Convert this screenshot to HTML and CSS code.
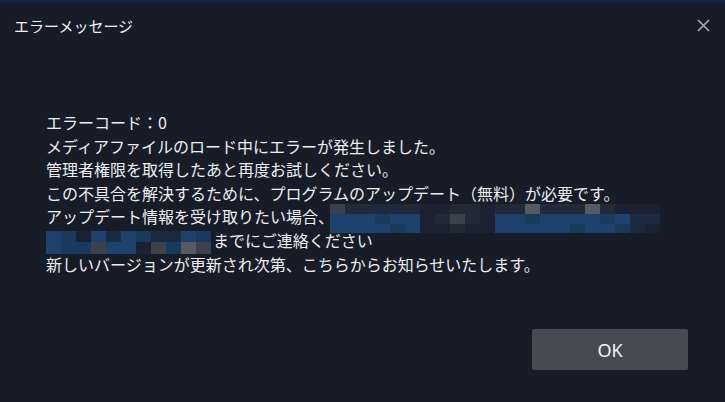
FILE: index.html
```html
<!DOCTYPE html>
<html lang="ja">
<head>
    <meta charset="UTF-8">
    <meta name="viewport" content="width=device-width, initial-scale=1.0">
    <title>エラーメッセージ</title>
    <link rel="stylesheet" href="styles.css">
</head>
<body>

    <div class="dialog">
        <div class="header">
            <span class="title">エラーメッセージ</span>
            <button class="close" aria-label="閉じる">
                <svg width="13" height="13" viewBox="0 0 13 13">
                    <path d="M1 1 L12 12 M12 1 L1 12" stroke="#a9aeb7" stroke-width="1.6" fill="none"/>
                </svg>
            </button>
        </div>

        <div class="message">
            <p>エラーコード：0</p>
            <p>メディアファイルのロード中にエラーが発生しました。</p>
            <p>管理者権限を取得したあと再度お試しください。</p>
            <p>この不具合を解決するために、プログラムのアップデート（無料）が必要です。</p>
            <p>アップデート情報を受け取りたい場合、<span class="mosaic wide">
                <i class="g"></i><i class="k"></i><i class="k"></i><i class="n"></i><i class="n"></i><i class="k"></i><i class="d"></i><i class="d"></i><i class="k"></i><i class="k"></i><i class="d"></i><i class="k"></i><i class="k"></i><i class="g2"></i><i class="k"></i><i class="k"></i><i class="k"></i><i class="g2"></i><i class="k"></i><i class="d"></i><i class="d"></i><i class="d"></i>
                <i class="b"></i><i class="b"></i><i class="b"></i><i class="b2"></i><i class="b"></i><i class="b"></i><i class="d"></i><i class="k"></i><i class="g"></i><i class="k"></i><i class="d"></i><i class="b"></i><i class="b"></i><i class="b2"></i><i class="b"></i><i class="b"></i><i class="b"></i><i class="b"></i><i class="b2"></i><i class="b"></i><i class="n"></i><i class="n"></i>
                <i class="b"></i><i class="b"></i><i class="b"></i><i class="b"></i><i class="b2"></i><i class="b"></i><i class="d"></i><i class="d"></i><i class="k"></i><i class="d"></i><i class="d"></i><i class="b"></i><i class="b"></i><i class="b"></i><i class="b"></i><i class="b"></i><i class="b2"></i><i class="b"></i><i class="b"></i><i class="b2"></i><i class="n"></i><i class="d"></i>
            </span></p>
            <p><span class="mosaic short">
                <i class="b"></i><i class="b2"></i><i class="d"></i><i class="b"></i><i class="n"></i><i class="b"></i><i class="b2"></i><i class="n"></i><i class="n"></i><i class="b"></i><i class="b2"></i>
                <i class="b"></i><i class="b2"></i><i class="b2"></i><i class="g"></i><i class="b"></i><i class="b"></i><i class="d"></i><i class="g"></i><i class="b2"></i><i class="g2"></i><i class="g"></i>
            </span>までにご連絡ください</p>
            <p>新しいバージョンが更新され次第、こちらからお知らせいたします。</p>
        </div>

        <div class="footer">
            <button class="ok">OK</button>
        </div>
    </div>

</body>
</html>
```

FILE: styles.css
```css
html, body {
    margin: 0;
    height: 100%;
}

body {
    background-color: #161d29;
    color: #eceef1;
    font-family: "Noto Sans CJK JP", "Noto Sans", sans-serif;
}

.dialog {
    height: 100%;
    box-sizing: border-box;
    border-top: 3px solid #0f2447;
    display: flex;
    flex-direction: column;
}

.header {
    height: 44px;
    padding: 0 15px 0 14px;
    display: flex;
    align-items: center;
    justify-content: space-between;
}

.title {
    font-size: 15px;
    color: #f0f1f3;
}

.close {
    background: none;
    border: none;
    padding: 0;
    width: 13px;
    height: 13px;
    display: flex;
    cursor: pointer;
}

.message {
    margin-top: 64px;
    padding-left: 46px;
    font-size: 16px;
    line-height: 23.5px;
}

.message p {
    margin: 0;
    white-space: nowrap;
}

.mosaic {
    display: inline-grid;
    vertical-align: middle;
}

.mosaic.wide {
    grid-template-columns: repeat(22, 15px);
    grid-template-rows: 10px 10px 9px;
    margin: -4px 0 -4px -4px;
}

.mosaic.short {
    grid-template-columns: repeat(11, 15px);
    grid-template-rows: 11px 12px;
    margin: -2px 2px -1px 0;
}

.mosaic i {
    display: block;
}

.d { background-color: #1a2130; }
.k { background-color: #232a37; }
.n { background-color: #1c2a40; }
.b { background-color: #1d426e; }
.b2 { background-color: #19395f; }
.g { background-color: #3b414d; }
.g2 { background-color: #555a63; }

.footer {
    margin-top: auto;
    padding: 0 37px 32px 0;
    display: flex;
    justify-content: flex-end;
}

.ok {
    width: 156px;
    height: 41px;
    background-color: #464a53;
    color: #f2f3f5;
    border: none;
    border-radius: 2px;
    font-family: "Noto Sans", "Liberation Sans", sans-serif;
    font-size: 18px;
    cursor: pointer;
}

.ok:hover {
    background-color: #52565f;
}
```
